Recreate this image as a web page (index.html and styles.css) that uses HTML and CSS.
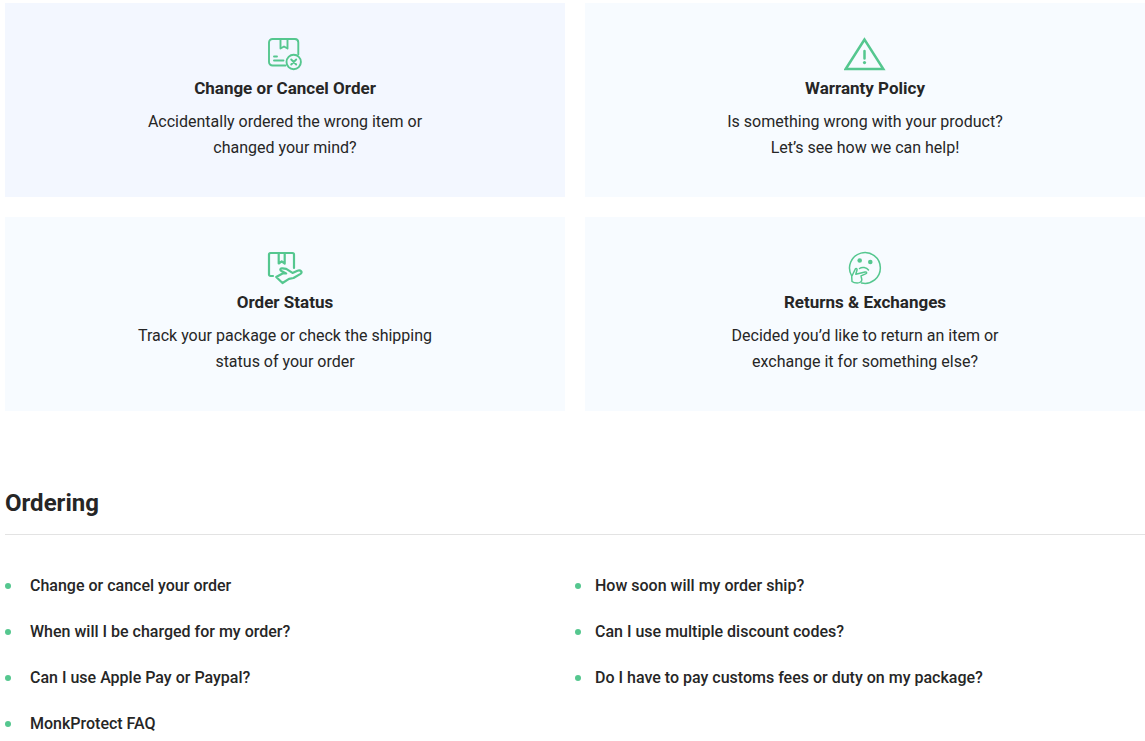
FILE: index.html
```html
<!DOCTYPE html>
<html lang="en">
<head>
<meta charset="utf-8">
<meta name="viewport" content="width=device-width, initial-scale=1">
<title>Help Center</title>
<link rel="stylesheet" href="styles.css">
</head>
<body>
<main class="page">
  <section class="cards">
    <a class="card card-active" href="#cancel">
      <svg class="icon icon-medium" viewBox="0 0 42 34" aria-hidden="true">
        <path d="M21.500 28.500H8.500a3.500 3.500 0 0 1-3.500-3.500v-19.500A3.500 3.500 0 0 1 8.500 2h22.500A3.500 3.500 0 0 1 34.300 5.500V17.500"/>
        <path d="M16.500 2v9.500l3.500-2 3.500 2V2M10 19.500h3M10 23.500h9.500"/>
        <circle cx="29.700" cy="25" r="7.200"/>
        <path d="M27.200 22.500l5 5M32.200 22.500l-5 5"/>
      </svg>
      <h3 class="card-title">Change or Cancel Order</h3>
      <p class="card-text">Accidentally ordered the wrong item or changed your mind?</p>
    </a>
    <a class="card" href="#warranty">
      <svg class="icon icon-bold" viewBox="0 0 42 34" aria-hidden="true">
        <path d="M20.500 2.500L1.700 32h37.600zM20.500 14v7.500"/>
        <circle class="dot" cx="20.500" cy="25.600" r="1.600"/>
      </svg>
      <h3 class="card-title">Warranty Policy</h3>
      <p class="card-text">Is something wrong with your product? Let’s see how we can help!</p>
    </a>
    <a class="card" href="#status">
      <svg class="icon icon-heavy" viewBox="0 0 42 34" aria-hidden="true">
        <path d="M9 25H6.500A1.500 1.500 0 0 1 5 23.500v-20A1.500 1.500 0 0 1 6.500 2h22A1.500 1.500 0 0 1 30 3.500V17M14.700 2v10.500l3-2.200 3 2.200V2"/>
        <path d="M12.200 26l6.800-3.800 3.200.2-4.700-2.400c-2.200-1.200-.8-3 1-2.700l3.700.6 6.300 4 5-2.200c3.300-1 5.500 1.500 3 3.200L29.500 27l-4.500.8-6.500 4.200z"/>
      </svg>
      <h3 class="card-title">Order Status</h3>
      <p class="card-text">Track your package or check the shipping status of your order</p>
    </a>
    <a class="card" href="#returns">
      <svg class="icon" viewBox="0 0 42 34" aria-hidden="true">
        <path d="M7.500 24.500A15.400 15.400 0 1 1 17.500 32"/>
        <circle class="dot" cx="15.700" cy="9.500" r="2.300"/>
        <circle class="dot" cx="26.300" cy="11" r="2.300"/>
        <path d="M15.500 17.500c2.500-1.800 7-1.200 9 1.500"/>
        <path d="M8 30.500l-.3-5 3.500-7.300c.8-1.300 2.300-.5 1.800.8l-1.200 4.200 9.200-2.200c2-.3 2.200 1.400.6 1.900l-4.600 2 .8 3.600c.2 2-1.800 3.500-4.600 3.500-2.500 0-4-.5-5.200-1.500z"/>
      </svg>
      <h3 class="card-title">Returns &amp; Exchanges</h3>
      <p class="card-text">Decided you’d like to return an item or exchange it for something else?</p>
    </a>
  </section>
  <section class="topic">
    <h2 class="topic-title">Ordering</h2>
    <ul class="questions">
      <li><a href="#q1">Change or cancel your order</a></li>
      <li><a href="#q2">How soon will my order ship?</a></li>
      <li><a href="#q3">When will I be charged for my order?</a></li>
      <li><a href="#q4">Can I use multiple discount codes?</a></li>
      <li><a href="#q5">Can I use Apple Pay or Paypal?</a></li>
      <li><a href="#q6">Do I have to pay customs fees or duty on my package?</a></li>
      <li><a href="#q7">MonkProtect FAQ</a></li>
    </ul>
  </section>
</main>
</body>
</html>
```
FILE: styles.css
```css
* { box-sizing: border-box; }
body {
  margin: 0;
  background: #fff;
  color: #262626;
  font-family: Roboto, "Liberation Sans", sans-serif;
  font-size: 16px;
  line-height: 26px;
}
a { color: inherit; text-decoration: none; }
h2, h3, p, ul { margin: 0; padding: 0; }
.page { padding: 3px 0 0 5px; }
.cards {
  display: grid;
  grid-template-columns: 1fr 1fr;
  gap: 20px;
}
.card {
  display: flex;
  flex-direction: column;
  align-items: center;
  padding: 34px 20px 36px;
  background: #f7fbff;
  text-align: center;
}
.card-active { background: #f3f7ff; }
.icon {
  width: 42px;
  height: 34px;
  fill: none;
  stroke: #55c78f;
  stroke-width: 1.5;
  stroke-linecap: round;
  stroke-linejoin: round;
}
.icon-medium { stroke-width: 1.9; }
.icon-heavy { stroke-width: 2.2; }
.icon-bold { stroke-width: 2.5; stroke-linejoin: miter; }
.dot { fill: #55c78f; stroke: none; }
.card-title {
  margin: 5px 0 9px;
  font-size: 17px;
  font-weight: 700;
  line-height: 24px;
}
.card-text { max-width: 300px; }
.topic { margin-top: 76px; }
.topic-title {
  padding-bottom: 15px;
  border-bottom: 1px solid #e3e3e3;
  font-size: 24px;
  font-weight: 700;
  line-height: 32px;
}
.questions {
  display: grid;
  grid-template-columns: 1fr 1fr;
  row-gap: 20px;
  margin-top: 38px;
  list-style: none;
  font-weight: 500;
}
.questions li {
  display: flex;
  align-items: center;
  gap: 19px;
}
.questions li:nth-child(even) { gap: 14px; }
.questions li::before {
  content: "";
  width: 6px;
  height: 6px;
  border-radius: 50%;
  background: #55c78f;
}
```
